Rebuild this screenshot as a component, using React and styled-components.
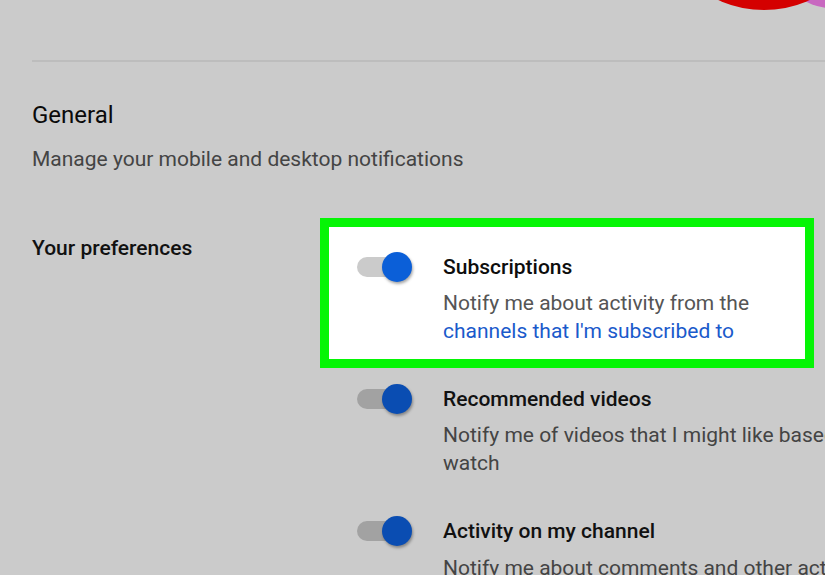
import React from "react";
import styled, { createGlobalStyle, css } from "styled-components";

const GlobalStyle = createGlobalStyle`
  html, body {
    margin: 0;
    padding: 0;
    background: #cbcbcb;
    overflow: hidden;
  }
  body {
    font-family: Roboto, "Noto Sans", Arial, sans-serif;
  }
`;

// страница целиком — шире окна, правый край обрезан
const Page = styled.div`
  position: relative;
  width: 1100px;
  height: 575px;
  padding-left: 32px;
  box-sizing: border-box;
`;

const Decoration = styled.svg`
  position: absolute;
  top: 0;
  left: 700px;
`;

const TopBar = styled.div`
  height: 60px;
`;

const Divider = styled.div`
  height: 2px;
  background: #bdbdbd;
`;

const SectionTitle = styled.h2`
  margin: 39px 0 0;
  font-size: 24px;
  line-height: 28px;
  font-weight: 400;
  color: #0a0a0a;
`;

const SectionSub = styled.p`
  margin: 18px 0 0;
  font-size: 21px;
  line-height: 24px;
  color: #444444;
`;

const PrefsRow = styled.div`
  display: flex;
  align-items: flex-start;
  margin-top: 65px;
`;

const PrefsLabel = styled.div`
  width: 325px;
  flex: none;
  font-size: 21px;
  line-height: 24px;
  font-weight: 500;
  color: #111111;
`;

const List = styled.div`
  display: flex;
  flex-direction: column;
  gap: 39px;
  padding-top: 15.6px;
`;

const Item = styled.div`
  display: flex;
  align-items: flex-start;
  gap: 31px;

  ${(p) =>
    p.$highlight &&
    css`
      width: 494px;
      box-sizing: border-box;
      margin: -33.8px 0 -23.4px -37px;
      padding: 24.8px 0 14.4px 28px;
      background: #ffffff;
      border: 9px solid #05f505;
    `}
`;

const Toggle = styled.div`
  position: relative;
  flex: none;
  width: 55px;
  height: 30px;
`;

const Track = styled.div`
  position: absolute;
  left: 0;
  top: 5px;
  width: 48px;
  height: 20px;
  border-radius: 10px;
  background: ${(p) => (p.$dim ? "#a2a2a2" : "#cbcbcb")};
`;

const Knob = styled.div`
  position: absolute;
  left: 25px;
  top: 0;
  width: 30px;
  height: 30px;
  border-radius: 50%;
  background: ${(p) => (p.$dim ? "#0a4db2" : "#0b5fd8")};
  box-shadow: 1px 2px 3px rgba(0, 0, 0, 0.35);
`;

const ItemText = styled.div`
  ${(p) =>
    p.$highlight
      ? css`
          flex: 1;
        `
      : css`
          flex: none;
          width: 510px;
        `}
`;

const ItemTitle = styled.div`
  font-size: 21px;
  line-height: 30px;
  font-weight: 500;
  color: ${(p) => (p.$dim ? "#111111" : "#0d0d0d")};
`;

const ItemDesc = styled.div`
  margin-top: 7.4px;
  font-size: 21px;
  line-height: 28px;
  color: ${(p) => (p.$dim ? "#444444" : "#555555")};
`;

const DescLink = styled.a`
  display: inline-block;
  white-space: nowrap;
  color: #1a5acb;
  text-decoration: none;
`;

const prefs = [
  {
    title: "Subscriptions",
    desc: "Notify me about activity from the ",
    link: "channels that I'm subscribed to",
    highlight: true,
  },
  {
    title: "Recommended videos",
    desc: "Notify me of videos that I might like based on what I watch",
  },
  {
    title: "Activity on my channel",
    desc: "Notify me about comments and other activity on my channel or videos",
  },
];

function PrefItem({ title, desc, link, highlight }) {
  const dim = !highlight;
  return (
    <Item $highlight={highlight}>
      <Toggle>
        <Track $dim={dim} />
        <Knob $dim={dim} />
      </Toggle>
      <ItemText $highlight={highlight}>
        <ItemTitle $dim={dim}>{title}</ItemTitle>
        <ItemDesc $dim={dim}>
          {desc}
          {link && <DescLink href="#">{link}</DescLink>}
        </ItemDesc>
      </ItemText>
    </Item>
  );
}

export default function App() {
  return (
    <>
      <GlobalStyle />
      <Page>
        <Decoration width="125" height="30" viewBox="0 0 125 30">
          <circle cx="130" cy="-40" r="48" fill="#c868c0" />
          <circle cx="64" cy="-100" r="110" fill="#d40000" />
        </Decoration>
        <TopBar />
        <Divider />
        <SectionTitle>General</SectionTitle>
        <SectionSub>Manage your mobile and desktop notifications</SectionSub>
        <PrefsRow>
          <PrefsLabel>Your preferences</PrefsLabel>
          <List>
            {prefs.map((p) => (
              <PrefItem key={p.title} {...p} />
            ))}
          </List>
        </PrefsRow>
      </Page>
    </>
  );
}
